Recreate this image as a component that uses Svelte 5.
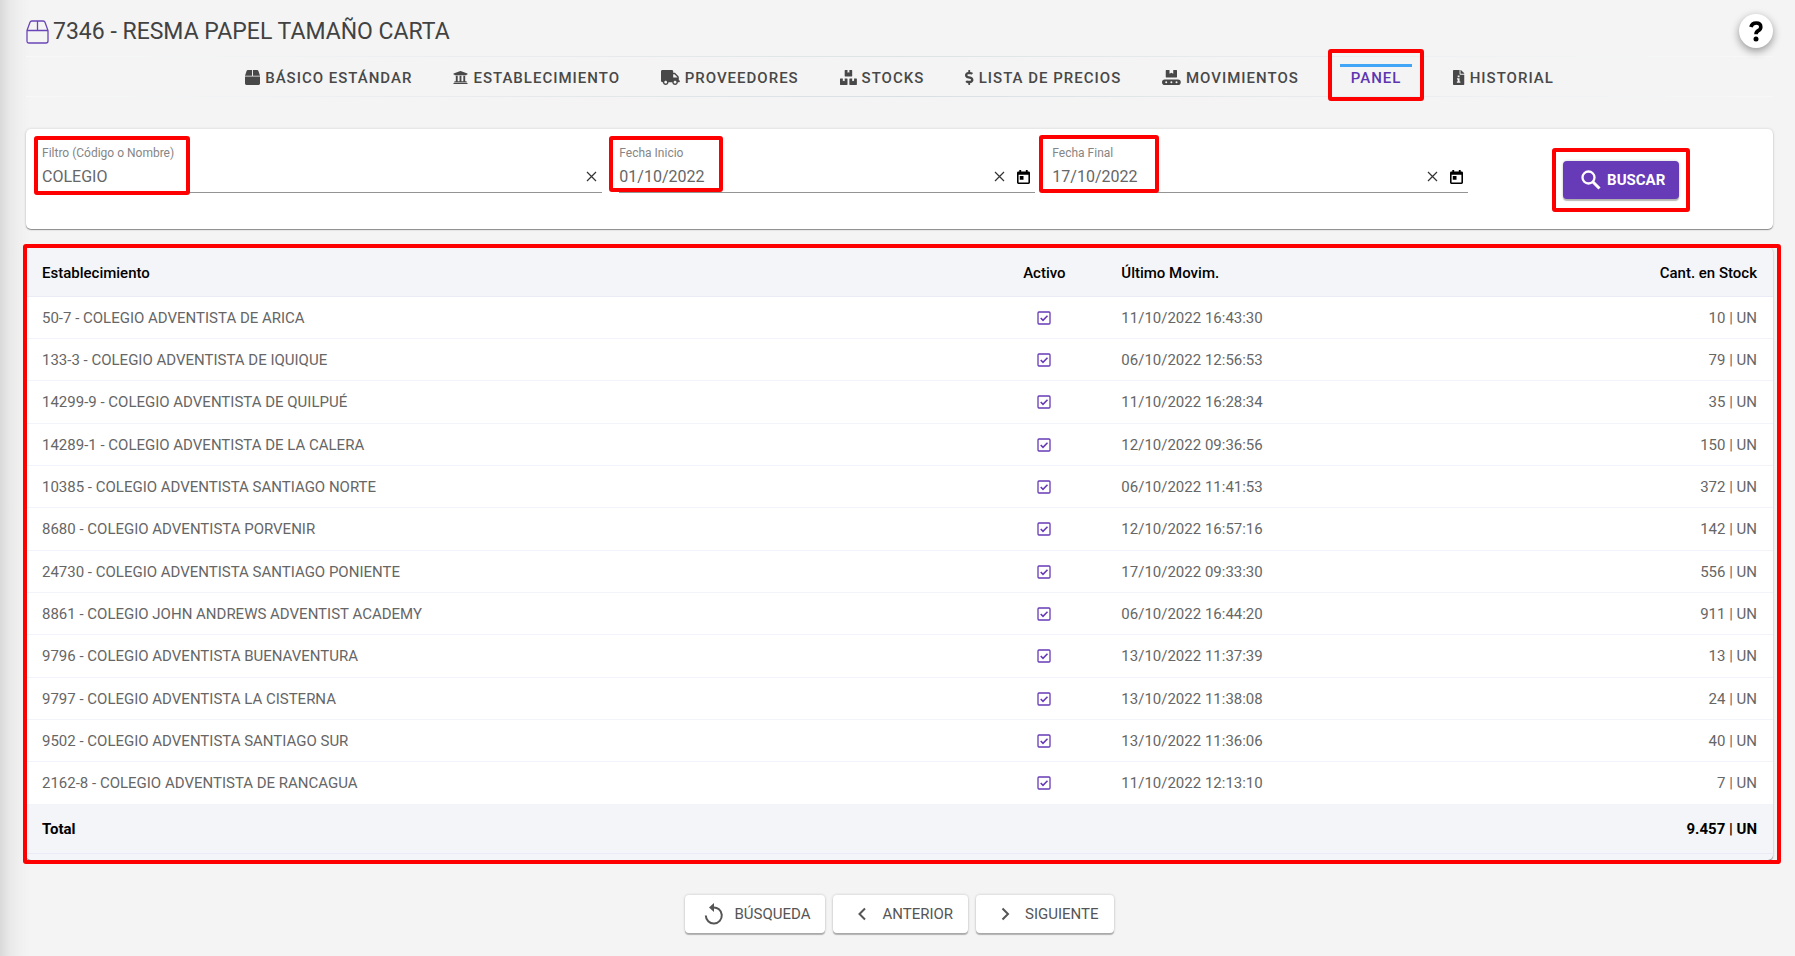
<script lang="ts">
  interface Tab {
    label: string;
    icon?: string;
    viewBox?: string;
    active?: boolean;
  }

  interface Row {
    name: string;
    active: boolean;
    lastMove: string;
    stock: string;
  }

  const tabs: Tab[] = [
    {
      label: 'BÁSICO ESTÁNDAR',
      viewBox: '0 0 512 512',
      icon: 'M509.5 184.6L458.9 32.8C452.4 13.2 434.1 0 413.4 0H272v192h238.7c-.4-2.5-.4-5-1.2-7.4zM240 0H98.6c-20.7 0-39 13.2-45.5 32.8L2.5 184.6c-.8 2.4-.8 4.9-1.2 7.4H240V0zM0 224v240c0 26.5 21.5 48 48 48h416c26.5 0 48-21.5 48-48V224H0z',
    },
    {
      label: 'ESTABLECIMIENTO',
      viewBox: '0 0 512 512',
      icon: 'M496 128v16a8 8 0 0 1-8 8h-24v12c0 6.6-5.4 12-12 12H60c-6.6 0-12-5.4-12-12v-12H24a8 8 0 0 1-8-8v-16a8 8 0 0 1 4.9-7.4l232-88a8 8 0 0 1 6.2 0l232 88A8 8 0 0 1 496 128zm-24 304H40c-13.3 0-24 10.7-24 24v16a8 8 0 0 0 8 8h464a8 8 0 0 0 8-8v-16c0-13.3-10.7-24-24-24zM96 192v192H60c-6.6 0-12 5.4-12 12v20h416v-20c0-6.6-5.4-12-12-12h-36V192h-64v192h-64V192h-64v192h-64V192H96z',
    },
    {
      label: 'PROVEEDORES',
      viewBox: '0 0 640 512',
      icon: 'M624 352h-16V243.9c0-12.7-5.1-24.9-14.1-33.9L494 110.1c-9-9-21.2-14.1-33.9-14.1H416V48c0-26.5-21.5-48-48-48H48C21.5 0 0 21.5 0 48v320c0 26.5 21.5 48 48 48h16c0 53 43 96 96 96s96-43 96-96h128c0 53 43 96 96 96s96-43 96-96h48c8.8 0 16-7.2 16-16v-32c0-8.8-7.2-16-16-16zM160 464c-26.5 0-48-21.5-48-48s21.5-48 48-48 48 21.5 48 48-21.5 48-48 48zm320 0c-26.5 0-48-21.5-48-48s21.5-48 48-48 48 21.5 48 48-21.5 48-48 48zm80-208H416V144h44.1l99.9 99.9V256z',
    },
    {
      label: 'STOCKS',
      viewBox: '0 0 576 512',
      icon: 'M560 288h-80v96l-32-21.3-32 21.3v-96h-80c-8.8 0-16 7.2-16 16v192c0 8.8 7.2 16 16 16h224c8.8 0 16-7.2 16-16V304c0-8.8-7.2-16-16-16zm-384-64h224c8.8 0 16-7.2 16-16V16c0-8.8-7.2-16-16-16h-80v96l-32-21.3L256 96V0h-80c-8.8 0-16 7.2-16 16v192c0 8.8 7.2 16 16 16zm64 64h-80v96l-32-21.3L96 384v-96H16c-8.8 0-16 7.2-16 16v192c0 8.8 7.2 16 16 16h224c8.8 0 16-7.2 16-16V304c0-8.8-7.2-16-16-16z',
    },
    {
      label: 'LISTA DE PRECIOS',
      viewBox: '0 0 288 512',
      icon: 'M209.2 233.4l-108-31.6C88.7 198.2 80 186.5 80 173.5c0-16.3 13.2-29.5 29.5-29.5h66.3c12.2 0 24.2 3.7 34.2 10.5 6.1 4.1 14.3 3.1 19.5-2l34.8-34c7.1-6.9 6.1-18.4-1.8-24.5C238 74.8 207.4 64.1 176 64V16c0-8.8-7.2-16-16-16h-32c-8.8 0-16 7.2-16 16v48h-2.5C45.8 64-5.4 118.7.5 183.6c4.2 46.1 39.4 83.6 83.8 96.6l102.5 30c12.5 3.7 21.2 15.3 21.2 28.3 0 16.3-13.2 29.5-29.5 29.5h-66.3C100 368 88 364.3 78 357.5c-6.1-4.1-14.3-3.1-19.5 2l-34.8 34c-7.1 6.9-6.1 18.4 1.8 24.5 24.5 19.2 55.1 29.9 86.5 30v48c0 8.8 7.2 16 16 16h32c8.8 0 16-7.2 16-16v-48.2c46.6-.9 90.3-28.6 105.7-72.7 21.5-61.6-14.6-124.8-72.5-141.7z',
    },
    {
      label: 'MOVIMIENTOS',
      viewBox: '0 0 640 512',
      icon: 'M144 256h352c9 0 16-7 16-16V16c0-9-7-16-16-16H384v128l-64-32-64 32V0H144c-9 0-16 7-16 16v224c0 9 7 16 16 16zM544 320H96a96 96 0 0 0 0 192h448a96 96 0 0 0 0-192zM144 450a34 34 0 1 1 0-68 34 34 0 0 1 0 68zm176 0a34 34 0 1 1 0-68 34 34 0 0 1 0 68zm176 0a34 34 0 1 1 0-68 34 34 0 0 1 0 68z',
    },
    { label: 'PANEL', active: true },
    {
      label: 'HISTORIAL',
      viewBox: '0 0 384 512',
      icon: 'M224 136V0H24C10.700 0 0 10.700 0 24v464c0 13.300 10.700 24 24 24h336c13.300 0 24-10.700 24-24V160H248c-13.200 0-24-10.800-24-24zM160 190h64v60h-64zM136 280h88v110h28v44H132v-44h28v-66h-24zM384 122v6H256V0h6c6 0 12 3 17 7l98 98c4 5 7 11 7 17z',
    },
  ];

  const rows: Row[] = [
    { name: '50-7 - COLEGIO ADVENTISTA DE ARICA', active: true, lastMove: '11/10/2022 16:43:30', stock: '10' },
    { name: '133-3 - COLEGIO ADVENTISTA DE IQUIQUE', active: true, lastMove: '06/10/2022 12:56:53', stock: '79' },
    { name: '14299-9 - COLEGIO ADVENTISTA DE QUILPUÉ', active: true, lastMove: '11/10/2022 16:28:34', stock: '35' },
    { name: '14289-1 - COLEGIO ADVENTISTA DE LA CALERA', active: true, lastMove: '12/10/2022 09:36:56', stock: '150' },
    { name: '10385 - COLEGIO ADVENTISTA SANTIAGO NORTE', active: true, lastMove: '06/10/2022 11:41:53', stock: '372' },
    { name: '8680 - COLEGIO ADVENTISTA PORVENIR', active: true, lastMove: '12/10/2022 16:57:16', stock: '142' },
    { name: '24730 - COLEGIO ADVENTISTA SANTIAGO PONIENTE', active: true, lastMove: '17/10/2022 09:33:30', stock: '556' },
    { name: '8861 - COLEGIO JOHN ANDREWS ADVENTIST ACADEMY', active: true, lastMove: '06/10/2022 16:44:20', stock: '911' },
    { name: '9796 - COLEGIO ADVENTISTA BUENAVENTURA', active: true, lastMove: '13/10/2022 11:37:39', stock: '13' },
    { name: '9797 - COLEGIO ADVENTISTA LA CISTERNA', active: true, lastMove: '13/10/2022 11:38:08', stock: '24' },
    { name: '9502 - COLEGIO ADVENTISTA SANTIAGO SUR', active: true, lastMove: '13/10/2022 11:36:06', stock: '40' },
    { name: '2162-8 - COLEGIO ADVENTISTA DE RANCAGUA', active: true, lastMove: '11/10/2022 12:13:10', stock: '7' },
  ];

  let filter = $state('COLEGIO');
  let startDate = $state('01/10/2022');
  let endDate = $state('17/10/2022');
</script>

{#snippet clearButton(label: string, onclear: () => void)}
  <button type="button" class="icon-btn" aria-label={label} onclick={onclear}>
    <svg width="11" height="11" viewBox="0 0 11 11">
      <path d="M1 1l9 9M10 1l-9 9" fill="none" stroke="#333" stroke-width="1.2" />
    </svg>
  </button>
{/snippet}

{#snippet calendarButton(label: string)}
  <button type="button" class="icon-btn" aria-label={label}>
    <svg width="13" height="14" viewBox="0 0 14 15">
      <path
        d="M2.500 0h2v1.500h5V0h2v1.500H12.500A1.500 1.500 0 0 1 14 3v10.500a1.500 1.500 0 0 1-1.500 1.500h-11A1.500 1.500 0 0 1 0 13.500V3a1.500 1.500 0 0 1 1.500-1.500h1zM1.700 5v8.300h10.600V5zM3 6.500h4v4H3z"
        fill="#000"
        fill-rule="evenodd"
      />
    </svg>
  </button>
{/snippet}

<div class="page">
  <header class="header">
    <h1>
      <svg width="23" height="24" viewBox="0 0 23 24" fill="none" stroke="#6a45b8" stroke-width="1.300">
        <path d="M1 10.500L4 2.300Q4.500 1 5.800 1h11.400Q18.500 1 19 2.300l3 8.200V21q0 2-2 2H3q-2 0-2-2zM1 10.500h21M11.500 1v9.500" />
      </svg>
      7346 - RESMA PAPEL TAMAÑO CARTA
    </h1>
    <button type="button" class="help" aria-label="Ayuda">
      <svg width="14" height="21" viewBox="0 0 14 21">
        <path d="M1.900 6Q3 2 7.200 2q4.600 0 4.600 3.900 0 2.200-2.500 3.700-2.300 1.400-2.300 3.600" fill="none" stroke="#000" stroke-width="3.600" />
        <circle cx="7" cy="18" r="2.500" fill="#000" />
      </svg>
    </button>
  </header>

  <nav class="tabs">
    {#each tabs as tab (tab.label)}
      <a href="#{tab.label.toLowerCase().replaceAll(' ', '-')}" class="tab" class:active={tab.active}>
        {#if tab.icon}
          <svg height="15" viewBox={tab.viewBox}>
            <path d={tab.icon} fill="currentColor" fill-rule="evenodd" />
          </svg>
        {/if}
        {tab.label}
        {#if tab.active}
          <span class="mark tab-mark"></span>
        {/if}
      </a>
    {/each}
  </nav>

  <form class="card filters" onsubmit={(e) => e.preventDefault()}>
    <div class="field wide">
      <label for="filter">Filtro (Código o Nombre)</label>
      <div class="control">
        <input id="filter" type="text" bind:value={filter} />
        {@render clearButton('Limpiar filtro', () => (filter = ''))}
      </div>
      <span class="mark filter-mark"></span>
    </div>
    <div class="field">
      <label for="start-date">Fecha Inicio</label>
      <div class="control">
        <input id="start-date" type="text" bind:value={startDate} />
        {@render clearButton('Limpiar fecha inicio', () => (startDate = ''))}
        {@render calendarButton('Elegir fecha inicio')}
      </div>
      <span class="mark start-mark"></span>
    </div>
    <div class="field">
      <label for="end-date">Fecha Final</label>
      <div class="control">
        <input id="end-date" type="text" bind:value={endDate} />
        {@render clearButton('Limpiar fecha final', () => (endDate = ''))}
        {@render calendarButton('Elegir fecha final')}
      </div>
      <span class="mark end-mark"></span>
    </div>
    <div class="search">
      <div class="search-wrap">
        <button type="submit" class="btn primary">
          <svg width="20" height="20" viewBox="0 0 20 20" fill="none" stroke="currentColor">
            <circle cx="7.500" cy="7.500" r="6" stroke-width="2.300" />
            <path d="M12 12l6.500 6.500" stroke-width="3" />
          </svg>
          BUSCAR
        </button>
        <span class="mark search-mark"></span>
      </div>
    </div>
  </form>

  <section class="card results">
    <table>
      <thead>
        <tr>
          <th class="col-name">Establecimiento</th>
          <th class="col-active">Activo</th>
          <th>Último Movim.</th>
          <th class="num">Cant. en Stock</th>
        </tr>
      </thead>
      <tbody>
        {#each rows as row (row.name)}
          <tr>
            <td>{row.name}</td>
            <td class="col-active">
              {#if row.active}
                <svg width="14" height="14" viewBox="0 0 14 14" fill="none" stroke="#673ab7" role="img" aria-label="Activo">
                  <rect x="1" y="1" width="12" height="12" rx="1" stroke-width="1.300" />
                  <path d="M3.700 7l2.300 2.300 4.500-4.600" stroke-width="1.600" />
                </svg>
              {/if}
            </td>
            <td>{row.lastMove}</td>
            <td class="num">{row.stock} | UN</td>
          </tr>
        {/each}
      </tbody>
      <tfoot>
        <tr>
          <td colspan="3">Total</td>
          <td class="num">9.457 | UN</td>
        </tr>
      </tfoot>
    </table>
    <span class="mark results-mark"></span>
  </section>

  <footer class="actions">
    <button type="button" class="btn">
      <svg width="20" height="22" viewBox="0 0 20 22">
        <path d="M9 4.500a8 8 0 1 1-7.200 8" fill="none" stroke="currentColor" stroke-width="2" />
        <path d="M10 0v9L5 4.500z" fill="currentColor" />
      </svg>
      BÚSQUEDA
    </button>
    <button type="button" class="btn">
      <svg width="20" height="20" viewBox="0 0 20 20">
        <path d="M13 4.500L7.500 10l5.500 5.500" fill="none" stroke="currentColor" stroke-width="2" />
      </svg>
      ANTERIOR
    </button>
    <button type="button" class="btn">
      <svg width="20" height="20" viewBox="0 0 20 20">
        <path d="M7.500 4.500L13 10l-5.500 5.500" fill="none" stroke="currentColor" stroke-width="2" />
      </svg>
      SIGUIENTE
    </button>
  </footer>
</div>

<style>
  :global(body) {
    background: #f4f4f4;
  }

  .page {
    box-sizing: border-box;
    min-height: 100vh;
    padding: 14px 22px 20px 26px;
    font-family: Roboto, 'Liberation Sans', sans-serif;
    font-size: 15px;
    color: #666;
    background: linear-gradient(to right, #d9d9d9, #e9e9e9 10px, #f0f0f0 20px, #f4f4f4 30px);
  }

  .header {
    display: flex;
    align-items: flex-end;
    justify-content: space-between;
    margin-bottom: 8px;
  }

  h1 {
    display: flex;
    align-items: center;
    gap: 4px;
    margin: 0;
    font-size: 23px;
    font-weight: 400;
    line-height: 32px;
    color: #424242;
  }

  .help {
    display: flex;
    align-items: center;
    justify-content: center;
    width: 34px;
    height: 34px;
    padding: 0;
    border: 0;
    border-radius: 50%;
    background: #fff;
    box-shadow: 0 3px 8px rgba(0, 0, 0, 0.4);
  }

  .tabs {
    display: flex;
    justify-content: center;
    gap: 41px;
    margin-bottom: 32px;
    /* hairlines that fade out towards both ends */
    background:
      linear-gradient(to right, #f8f8f8, #dde3e5 50%, #f8f8f8) top / 100% 1px no-repeat,
      linear-gradient(to right, #f8f8f8, #d8dfe3 50%, #f8f8f8) bottom / 100% 1px no-repeat;
  }

  .tab {
    position: relative;
    box-sizing: border-box;
    display: flex;
    align-items: center;
    gap: 5px;
    height: 41px;
    padding-top: 2px;
    font-weight: 500;
    letter-spacing: 1px;
    color: #484848;
    text-decoration: none;
    white-space: nowrap;
  }

  .tab.active {
    padding-left: 11px;
    padding-right: 11px;
    color: #5e35b1;
  }

  .tab.active::before {
    content: '';
    position: absolute;
    top: 8px;
    left: 0;
    right: 0;
    height: 3px;
    background: #42a5f5;
  }

  .card {
    position: relative;
    background: #fff;
    border-radius: 5px;
    box-shadow:
      0 1px 1px rgba(0, 0, 0, 0.4),
      0 0 3px rgba(0, 0, 0, 0.15);
  }

  .filters {
    display: grid;
    grid-template-columns: repeat(12, minmax(0, 1fr));
    align-items: start;
    column-gap: 17px;
    padding: 14px 16px 30px;
    margin-bottom: 18px;
  }

  .field {
    position: relative;
    grid-column: span 3;
    border-bottom: 1px solid #949494;
  }

  .field.wide {
    grid-column: span 4;
  }

  .field label {
    display: block;
    font-size: 12px;
    line-height: 20px;
    color: #858585;
  }

  .control {
    display: flex;
    align-items: center;
    gap: 12px;
    height: 27px;
    padding: 0 5px 2px 0;
  }

  .control input {
    flex: 1;
    min-width: 0;
    padding: 0;
    border: 0;
    outline: 0;
    background: none;
    font: inherit;
    font-size: 16px;
    color: #666;
  }

  .icon-btn {
    display: flex;
    padding: 0;
    border: 0;
    background: none;
  }

  .search {
    grid-column: span 2;
    display: flex;
    justify-content: center;
    padding-top: 18px;
  }

  .search-wrap {
    position: relative;
  }

  .btn {
    display: flex;
    align-items: center;
    gap: 10px;
    height: 38px;
    padding: 0 15px 0 19px;
    border: 0;
    border-radius: 4px;
    background: #fff;
    font: inherit;
    color: #555;
    box-shadow:
      0 2px 1px rgba(0, 0, 0, 0.25),
      0 0 3px rgba(0, 0, 0, 0.2);
  }

  .btn.primary {
    gap: 6px;
    padding: 0 14px 0 18px;
    font-weight: 700;
    color: #fff;
    background: #673ab7;
  }

  .results {
    padding: 2px 0 6px;
    background: #f4f5f8;
  }

  table {
    width: 100%;
    table-layout: fixed;
    border-collapse: separate;
    border-spacing: 0;
  }

  th,
  td {
    padding: 0 16px;
    text-align: left;
    border-bottom: 1px solid #f3f3fb;
  }

  th {
    box-sizing: border-box;
    height: 48px;
    font-weight: 500;
    color: #000;
    border-bottom-color: #ebebf7;
  }

  td {
    height: 41px;
    background: #fff;
  }

  tbody tr:nth-child(3n) td {
    height: 42px;
  }

  tfoot td {
    height: 48px;
    font-weight: 700;
    color: #000;
    background: #f4f5f8;
    border-bottom-color: #ebebf7;
  }

  .col-name {
    width: 54.8%;
  }

  .col-active {
    width: 122px;
    text-align: center;
  }

  .col-active svg {
    display: block;
    margin: 0 auto;
  }

  .num {
    text-align: right;
  }

  .actions {
    display: flex;
    justify-content: center;
    gap: 8px;
    margin-top: 35px;
  }

  /* red highlight frames laid over the controls */
  .mark {
    position: absolute;
    border: 4px solid #f00;
    border-radius: 3px;
    pointer-events: none;
  }

  .tab-mark {
    inset: -7px -12px -4px;
  }

  .filter-mark {
    top: -7px;
    bottom: -3px;
    left: -8px;
    width: 148px;
  }

  .start-mark {
    top: -7px;
    bottom: 0;
    left: -10px;
    width: 106px;
  }

  .end-mark {
    top: -8px;
    bottom: -1px;
    left: -13px;
    width: 112px;
  }

  .search-mark {
    inset: -13px -11px;
  }

  .results-mark {
    inset: -3px -8px -4px -3px;
  }
</style>
